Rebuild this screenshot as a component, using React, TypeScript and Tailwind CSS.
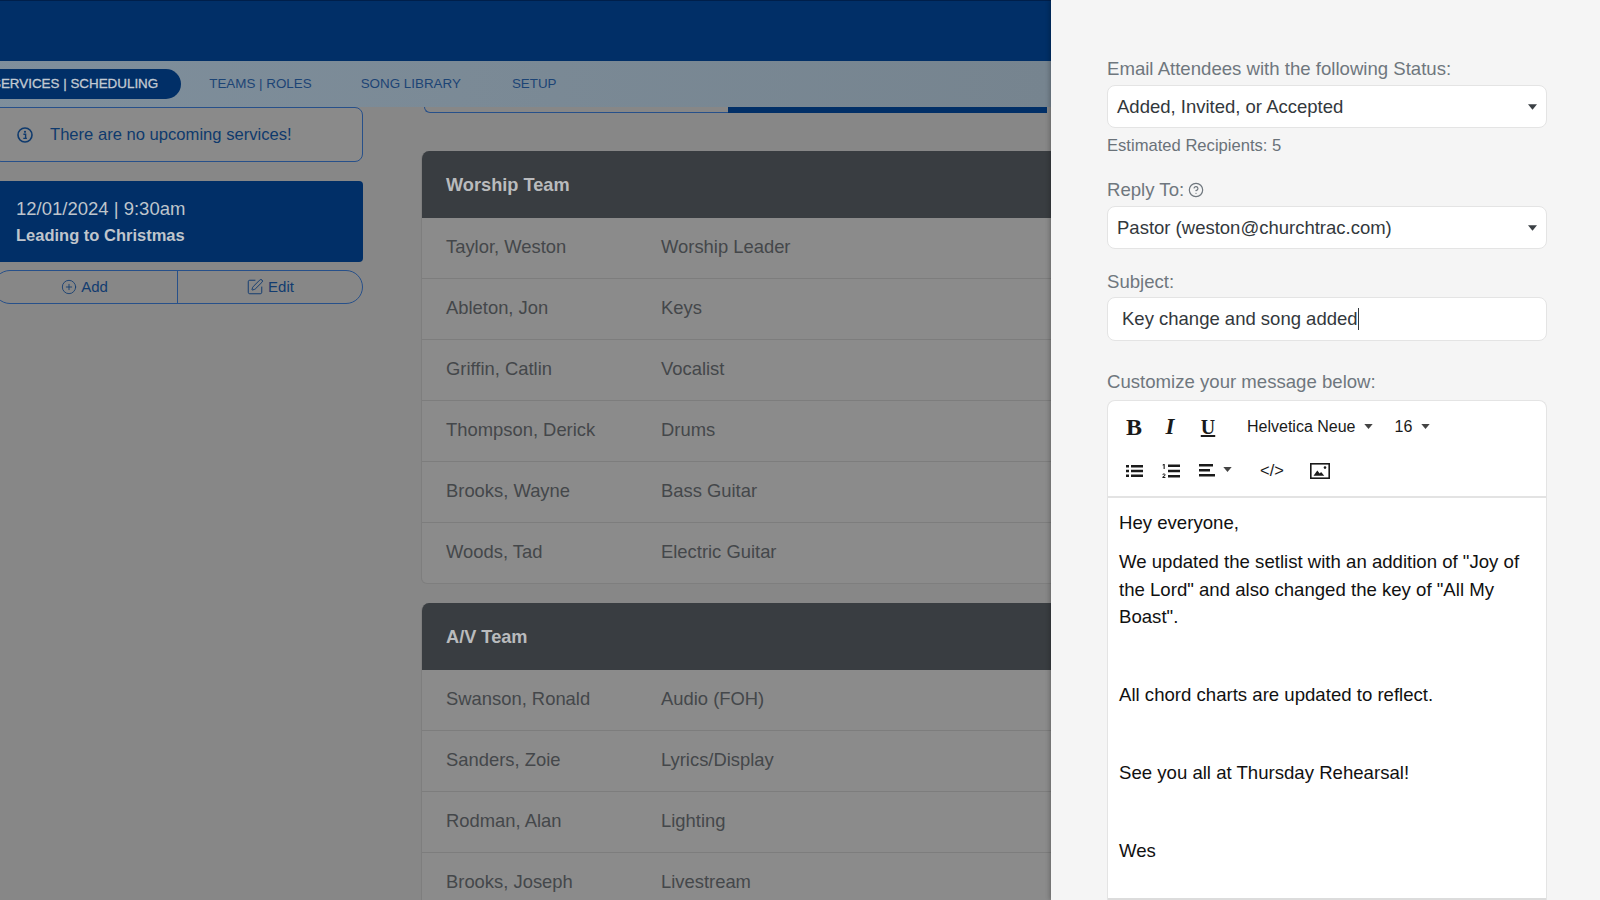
import React from 'react';
import { CirclePlus, SquarePen, CircleHelp } from 'lucide-react';

const Caret = ({ className = '' }: { className?: string }) => (
    <svg viewBox="0 0 10 6" className={`shrink-0 ${className}`} fill="currentColor">
        <path d="M0 0h10L5 6z" />
    </svg>
);

const InfoIcon = () => (
    <svg viewBox="0 0 16 16" className="w-4 h-4 shrink-0" fill="none" stroke="currentColor">
        <circle cx="8" cy="8" r="7" strokeWidth="1.6" />
        <circle cx="8" cy="4.8" r="1.1" fill="currentColor" stroke="none" />
        <path d="M6.4 7.2h2.2v4M6.3 11.4h3.6" strokeWidth="1.4" />
    </svg>
);

const ListIcon = () => (
    <svg viewBox="0 0 17 14" className="w-[17px] h-[14px]" fill="currentColor">
        <path d="M0 1h3v2.4H0zM5 1h12v2.4H5zM0 5.8h3v2.4H0zM5 5.8h12v2.4H5zM0 10.6h3V13H0zM5 10.6h12V13H5z" />
    </svg>
);

const OrderedIcon = () => (
    <svg viewBox="0 0 18 16" className="w-[18px] h-4" fill="currentColor">
        <path d="M6 1.5h12v2.4H6zM6 6.8h12v2.4H6zM6 12.1h12v2.4H6z" />
        <path d="M1.6 1h1.1v5H1.6V2.2L.6 2.6V1.7zM.4 15v-.9l2-1.9c.4-.4.1-.9-.4-.9-.4 0-.7.2-.8.6l-.8-.2c.2-.8.8-1.2 1.6-1.2 1.4 0 2 1.2 1.1 2.2l-1.3 1.3h1.6v1z" />
    </svg>
);

const AlignIcon = () => (
    <svg viewBox="0 0 16 13" className="w-4 h-[13px]" fill="currentColor">
        <path d="M0 0h14v2.4H0zM0 5h11v2.4H0zM0 10h16v2.4H0z" />
    </svg>
);

const PictureIcon = () => (
    <svg viewBox="0 0 20 16" className="w-5 h-4" fill="none" stroke="currentColor">
        <rect x="0.8" y="0.8" width="18.4" height="14.4" strokeWidth="1.6" />
        <path d="M3.5 12.7l3.8-5.2 2.4 2.9 1.4-1.5 3.2 3.8z" fill="currentColor" stroke="none" />
        <circle cx="15" cy="4.6" r="1.3" fill="currentColor" stroke="none" />
    </svg>
);

const TeamCard = ({ title, rows }: { title: string; rows: string[][] }) => (
    <div className="rounded-t-lg rounded-b-md overflow-hidden border-x border-b border-[#7e7e7e] bg-[#8b8b8b]">
        <div className="h-[67px] -mx-px bg-[#393d41] flex items-center pl-[25px] pt-[2px] text-[18.2px] font-bold text-[#b9bbbd]">
            {title}
        </div>
        {rows.map(([name, role], i) => (
            <div key={name} className={`flex items-center pb-[3px] text-[18.4px] text-[#44474a] ${i < rows.length - 1 ? 'h-[61px] border-b border-[#7d7d7d]' : 'h-[60px]'}`}>
                <span className="w-[239px] pl-[24px] shrink-0">{name}</span>
                <span>{role}</span>
            </div>
        ))}
    </div>
);

const SelectBox = ({ value }: { value: string }) => (
    <div className="h-[43px] bg-white rounded-lg border border-[#e4e4e4] flex items-center justify-between pl-[9px] pr-[9px] text-[18.5px] text-[#33383c]">
        <span>{value}</span>
        <Caret className="w-[9px] h-[6px] text-[#3b4045]" />
    </div>
);

const worship = [
    ['Taylor, Weston', 'Worship Leader'],
    ['Ableton, Jon', 'Keys'],
    ['Griffin, Catlin', 'Vocalist'],
    ['Thompson, Derick', 'Drums'],
    ['Brooks, Wayne', 'Bass Guitar'],
    ['Woods, Tad', 'Electric Guitar'],
];

const av = [
    ['Swanson, Ronald', 'Audio (FOH)'],
    ['Sanders, Zoie', 'Lyrics/Display'],
    ['Rodman, Alan', 'Lighting'],
    ['Brooks, Joseph', 'Livestream'],
];

export default function App() {
    return (
        <div className="w-[1600px] h-[900px] overflow-hidden flex font-['Liberation_Sans',Arial,sans-serif]">
            {/* dimmed page behind the drawer */}
            <div className="w-[1051px] shrink-0 h-full overflow-hidden bg-[#878787] flex flex-col">
                <div className="h-[61px] shrink-0 bg-[#012f67] border-t border-[#001f4a]" />
                <div className="h-[46px] shrink-0 bg-gradient-to-r from-[#7f8f9c] to-[#76848f] flex items-center -ml-[31px] text-[13.4px] text-[#1c4475]">
                    <span className="h-[30px] flex items-center rounded-full bg-[#012f67] text-[#c3cad2] px-[23px] [-webkit-text-stroke:0.3px_#c3cad2]">SERVICES | SCHEDULING</span>
                    <span className="ml-[28px]">TEAMS | ROLES</span>
                    <span className="ml-[49px]">SONG LIBRARY</span>
                    <span className="ml-[51px]">SETUP</span>
                </div>

                <div className="flex flex-1 min-h-0">
                    <div className="w-[370px] shrink-0 -ml-[7px]">
                        <div className="h-[55px] border border-[#27508a] rounded-b-lg rounded-tr-lg flex items-center gap-[17px] pl-[23px] text-[16.6px] text-[#0f3a6d] bg-[#8a8a8a]">
                            <InfoIcon />
                            <span className="pt-[2px]">There are no upcoming services!</span>
                        </div>
                        <div className="h-[81px] mt-[19px] rounded-sm bg-[#012f67] pl-[23px] flex flex-col justify-center text-[#bfc5cc]">
                            <div className="text-[18.5px] leading-[26px]">12/01/2024 | 9:30am</div>
                            <div className="text-[16.5px] font-bold leading-[26px]">Leading to Christmas</div>
                        </div>
                        <div className="h-[34px] mt-[8px] flex border border-[#27508a] rounded-full text-[15px] text-[#123c70]">
                            <div className="w-[184px] border-r border-[#27508a] flex items-center justify-center gap-[4px] pr-[2px]">
                                <CirclePlus size={16} strokeWidth={1.3} />
                                <span>Add</span>
                            </div>
                            <div className="flex-1 flex items-center justify-center gap-[4px]">
                                <SquarePen size={18} strokeWidth={1.3} />
                                <span>Edit</span>
                            </div>
                        </div>
                    </div>

                    <div className="w-[700px] shrink-0 ml-[58px]">
                        <div className="ml-[3px] h-[6px] flex">
                            <div className="w-[304px] border-b border-l border-[#27508a] rounded-bl-xl" />
                            <div className="w-[319px] bg-[#012f67]" />
                        </div>
                        <div className="mt-[38px] flex flex-col gap-[19px]">
                            <TeamCard title="Worship Team" rows={worship} />
                            <TeamCard title="A/V Team" rows={av} />
                        </div>
                    </div>
                </div>
            </div>

            {/* email drawer */}
            <div className="flex-1 h-full overflow-hidden bg-[#f5f5f5] pl-[56px] pr-[53px] pt-[57px] text-[#6f777e] text-[18.6px] shadow-[-2px_0_4px_rgba(0,0,0,0.2)]">
                <div className="leading-[24px] mb-[4px]">Email Attendees with the following Status:</div>
                <SelectBox value="Added, Invited, or Accepted" />
                <div className="mt-[7px] text-[16.6px] leading-[22px] text-[#6a7279]">Estimated Recipients: 5</div>

                <div className="mt-[21px] leading-[24px] mb-[4px] flex items-center gap-[4px]">
                    <span>Reply To:</span>
                    <CircleHelp size={16} strokeWidth={1.8} />
                </div>
                <SelectBox value="Pastor (weston@churchtrac.com)" />

                <div className="mt-[21px] leading-[24px] mb-[3px]">Subject:</div>
                <div className="h-[44px] bg-white rounded-lg border border-[#e4e4e4] flex items-center pl-[14px] text-[18.5px] text-[#33383c]">
                    <span className="border-r border-[#33383c] leading-[22px]">Key change and song added</span>
                </div>

                <div className="mt-[29px] leading-[24px] mb-[6px]">Customize your message below:</div>
                <div className="bg-white rounded-t-lg border-x border-t border-[#e4e4e4] text-[#111]">
                    <div className="h-[97px] border-b-2 border-[#e3e3e3] flex flex-col pl-[8px] text-[#1a1a1a]">
                        <div className="h-[52px] flex items-center text-[16px]">
                            <span className="w-[36px] text-center font-['Liberation_Serif',serif] font-bold text-[24px]">B</span>
                            <span className="w-[36px] text-center font-['Liberation_Serif',serif] font-bold italic text-[23px]">I</span>
                            <span className="w-[40px] text-center font-['Liberation_Serif',serif] font-bold underline text-[20px]">U</span>
                            <span className="ml-[19px]">Helvetica Neue</span>
                            <Caret className="w-[9px] h-[5px] ml-[8px] -mt-[2px] text-[#444]" />
                            <span className="ml-[22px]">16</span>
                            <Caret className="w-[9px] h-[5px] ml-[9px] -mt-[2px] text-[#444]" />
                        </div>
                        <div className="h-[35px] flex items-center">
                            <span className="w-[36px] flex justify-center"><ListIcon /></span>
                            <span className="w-[38px] flex justify-center"><OrderedIcon /></span>
                            <span className="ml-[9px]"><AlignIcon /></span>
                            <Caret className="w-[9px] h-[5px] ml-[8px] -mt-[2px] text-[#444]" />
                            <span className="w-[28px] ml-[26px] text-center text-[16.5px] leading-none">&lt;/&gt;</span>
                            <span className="ml-[24px]"><PictureIcon /></span>
                        </div>
                    </div>
                    <div className="h-[402px] border-b-2 border-[#dcdcdc] pt-[11px] px-[11px] text-[18.6px] leading-[27.4px] flex flex-col gap-[11.7px]">
                        <p>Hey everyone,</p>
                        <p>We updated the setlist with an addition of "Joy of the Lord" and also changed the key of "All My Boast".</p>
                        <p><br /></p>
                        <p>All chord charts are updated to reflect.</p>
                        <p><br /></p>
                        <p>See you all at Thursday Rehearsal!</p>
                        <p><br /></p>
                        <p>Wes</p>
                    </div>
                </div>
            </div>
        </div>
    );
}
